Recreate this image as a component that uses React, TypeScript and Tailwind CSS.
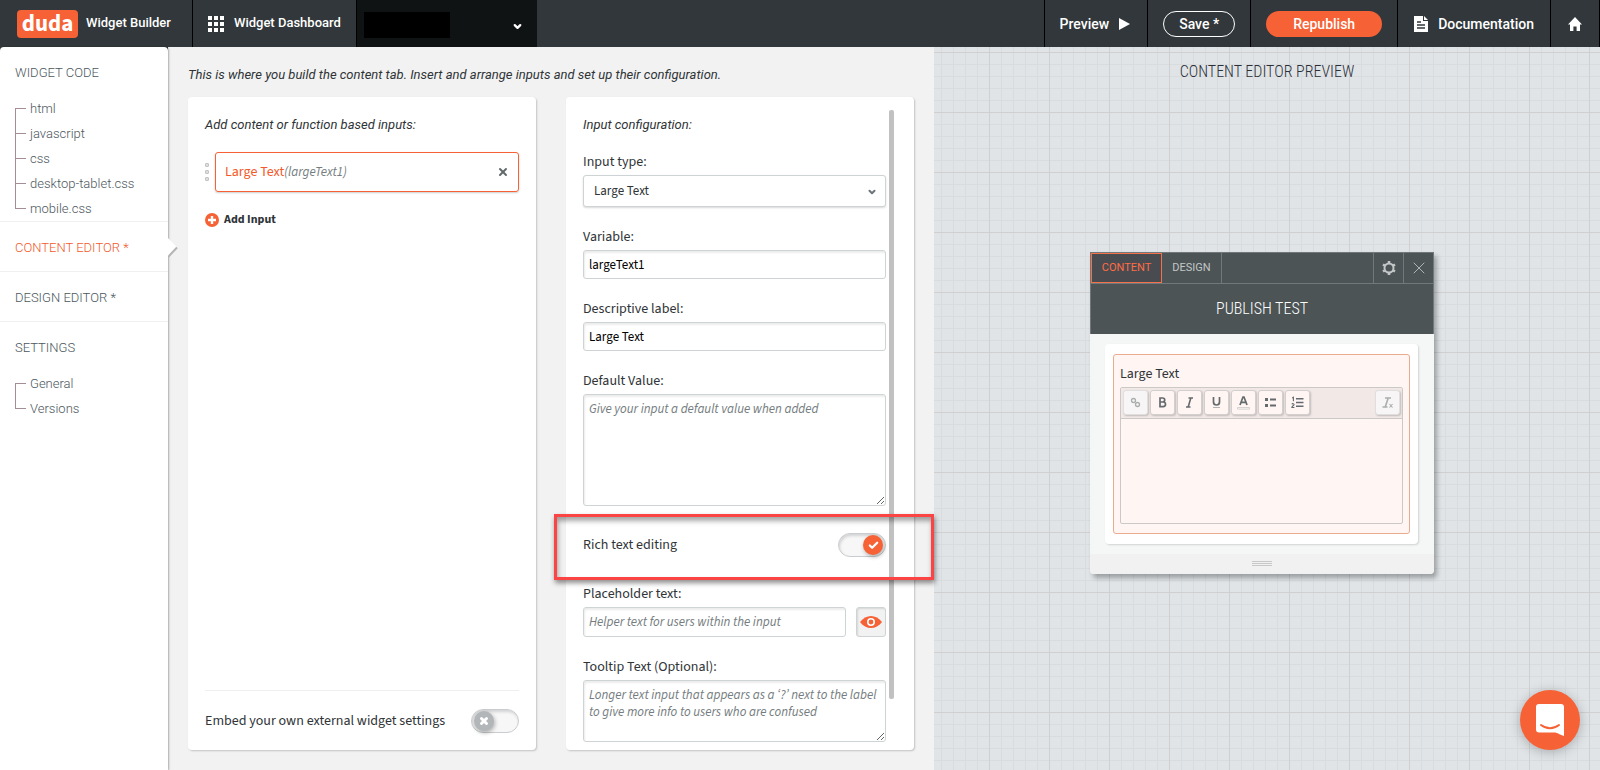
import type { ReactNode } from "react"
import { Check, ChevronDown, X } from "lucide-react"
import { clsx } from "clsx"

const source = "font-['Source_Sans_3','Source_Sans_Pro','Noto_Sans',sans-serif]"
const roboto = "font-['Roboto',sans-serif]"
const condensed = "font-['Roboto_Condensed','Roboto',sans-serif]"

const codeFiles = ["html", "javascript", "css", "desktop-tablet.css", "mobile.css"]
const settingsPages = ["General", "Versions"]

const field =
  "w-full rounded-[3px] border border-[#ced3d6] bg-white px-[5px] text-[13px] text-black shadow-[inset_1px_2px_2px_rgba(0,0,0,0.08)] outline-none placeholder:italic placeholder:text-[#757d80]"

function Header() {
  return (
    <header className={clsx(roboto, "flex h-[47px] shrink-0 bg-[#31373a] text-sm font-medium text-white")}>
      <a href="#" className="flex items-center gap-2 border-r border-black pr-[21px] pl-[17px] text-[13px]">
        <span
          className={clsx(
            source,
            "flex h-7 w-[61px] items-center justify-center rounded-[4px] bg-[#f66135] text-[23px] leading-7 font-bold",
          )}
        >
          duda
        </span>
        Widget Builder
      </a>
      <a href="#" className="flex items-center gap-[10px] border-r border-black px-[15px] text-[13px]">
        <svg width="16" height="16" viewBox="0 0 16 16" fill="currentColor">
          {[0, 6, 12].map((y) => [0, 6, 12].map((x) => <rect key={`${x}-${y}`} x={x} y={y} width="4" height="4" />))}
        </svg>
        Widget Dashboard
      </a>
      <button aria-label="Choose widget" className="flex w-[180px] items-center justify-between bg-[#101314] pr-[14px] pl-[7px]">
        <span className="mt-[3px] h-[26px] w-[86px] bg-black" />
        <ChevronDown size={11} strokeWidth={5} className="mt-[5px]" />
      </button>

      <nav className="ml-auto flex">
        <button className="flex items-center gap-[10px] border-l border-black pr-[17px] pl-[15px]">
          Preview
          <svg width="11" height="12" viewBox="0 0 11 12" fill="currentColor">
            <path d="M0 0l11 6-11 6z" />
          </svg>
        </button>
        <div className="flex items-center border-l border-black px-[15px]">
          <button className="h-[26px] w-[72px] rounded-full border border-white">Save *</button>
        </div>
        <div className="flex items-center border-l border-black px-[15px]">
          <button className="h-[26px] w-[116px] rounded-full bg-[#f66135]">Republish</button>
        </div>
        <a href="#" className="flex items-center gap-[10px] border-l border-black px-4">
          <svg width="14" height="16" viewBox="0 0 14 16">
            <path d="M0 0h9v5h5v11H0z" fill="#fff" />
            <path d="M10 0l4 4h-4z" fill="#fff" />
            <path d="M3 6h4M3 9h8M3 12h8" stroke="#31373a" strokeWidth="1.5" />
          </svg>
          Documentation
        </a>
        <a href="#" aria-label="Home" className="flex items-center border-x border-black px-[17px]">
          <svg width="14" height="14" viewBox="0 0 14 14" fill="currentColor">
            <path d="M7 0l7 7.6h-2V14H8.6V9.4H5.4V14H2V7.6H0z" />
          </svg>
        </a>
      </nav>
    </header>
  )
}

function Tree({ items }: { items: string[] }) {
  return (
    <ul className="pl-[15px]">
      {items.map((item, i) => (
        <li key={item} className="flex h-[25px]">
          <span className="flex w-[11px] flex-col">
            <span className={clsx("h-3 border-[#a58d95]", i > 0 && "border-l")} />
            <span className={clsx("flex-1 border-t border-[#a58d95]", i < items.length - 1 && "border-l")} />
          </span>
          <a href="#" className="ml-1 leading-[26px]">
            {item}
          </a>
        </li>
      ))}
    </ul>
  )
}

function Sidebar() {
  return (
    <aside
      className={clsx(
        roboto,
        "relative z-10 rounded-t-[4px] bg-white text-[13px] font-light text-[#4c575d] shadow-[1px_0_2px_rgba(0,0,0,0.3)]",
      )}
    >
      <section className="border-b border-[#f0f0f0]">
        <h2 className="h-[49px] pl-[15px] leading-[52px]">WIDGET CODE</h2>
        <Tree items={codeFiles} />
      </section>
      <div className="relative h-[50px] border-b border-[#f0f0f0] pl-[15px] leading-[52px]">
        <a href="#" className="text-[#f25a2c]">
          CONTENT EDITOR *
        </a>
        <svg width="10" height="22" viewBox="0 0 10 22" className="absolute top-[15px] left-full">
          <path d="M0 1l9 9.5L0 20z" fill="#fff" />
          <path d="M9 10.5L0 20" stroke="#b4b4b4" strokeWidth="2" />
        </svg>
      </div>
      <div className="h-[50px] border-b border-[#f0f0f0] pl-[15px] leading-[52px]">
        <a href="#">DESIGN EDITOR *</a>
      </div>
      <section>
        <h2 className="h-[49px] pl-[15px] leading-[52px]">SETTINGS</h2>
        <Tree items={settingsPages} />
      </section>
    </aside>
  )
}

function Toggle({ id, on }: { id: string; on?: boolean }) {
  return (
    <span className="relative flex">
      <input
        id={id}
        type="checkbox"
        defaultChecked={on}
        className="h-6 w-12 appearance-none rounded-full border border-[#c9cdd0] bg-[#f7f7f7] shadow-[inset_1px_2px_3px_rgba(0,0,0,0.15)]"
      />
      <span
        className={clsx(
          "pointer-events-none absolute top-[2px] flex size-5 items-center justify-center rounded-full text-white shadow-[1px_2px_4px_rgba(0,0,0,0.3)]",
          on ? "right-[3px] bg-[#f66135]" : "left-[3px] bg-[#b3b6b8]",
        )}
      >
        {on ? <Check size={11} strokeWidth={5} /> : <X size={10} strokeWidth={7} />}
      </span>
    </span>
  )
}

function Card({ children, className }: { children: ReactNode; className?: string }) {
  return (
    <section className={clsx("rounded-[4px] bg-white shadow-[1px_1px_2px_rgba(0,0,0,0.2)]", className)}>
      {children}
    </section>
  )
}

function InputsCard() {
  return (
    <Card className="flex flex-col px-[17px]">
      <h3 className={clsx(roboto, "mt-[18px] text-[13px] leading-5 italic")}>Add content or function based inputs:</h3>
      <div className="mt-[17px] flex items-center gap-[6px]">
        <span className="flex flex-col gap-[3px]">
          <span className="size-1 rounded-[1px] border border-[#c4c4c4] bg-[#dedede]" />
          <span className="size-1 rounded-[1px] border border-[#c4c4c4] bg-[#dedede]" />
          <span className="size-1 rounded-[1px] border border-[#c4c4c4] bg-[#dedede]" />
        </span>
        <div className="flex h-10 flex-1 items-center rounded-[3px] border border-[#f66135] px-[9px] shadow-[0_1px_2px_rgba(0,0,0,0.2)]">
          <span className="text-[#f25a2c]">Large Text</span>
          <em className="text-[13px] text-[#757d80]">(largeText1)</em>
          <button aria-label="Remove input" className="ml-auto text-[#62696c]">
            <X size={12} strokeWidth={4} />
          </button>
        </div>
      </div>
      <button className="mt-[18px] flex items-center gap-[5px] self-start text-xs leading-5 font-bold">
        <svg width="14" height="14" viewBox="0 0 14 14">
          <circle cx="7" cy="7" r="7" fill="#f66135" />
          <path d="M7 3v8M3 7h8" stroke="#fff" strokeWidth="2.4" />
        </svg>
        Add Input
      </button>
      <div className="mt-auto flex h-[60px] items-center justify-between border-t border-[#efefef]">
        <label htmlFor="embed">Embed your own external widget settings</label>
        <Toggle id="embed" />
      </div>
    </Card>
  )
}

function ConfigCard() {
  return (
    <Card className="flex items-start gap-[3px] pr-5 pl-[17px]">
      <form className="flex flex-1 flex-col pt-[18px] pb-2">
        <h3 className={clsx(roboto, "text-[13px] leading-5 italic")}>Input configuration:</h3>

        <label htmlFor="type" className="mt-[17px]">Input type:</label>
        <div className="relative mt-[3px]">
          <select
            id="type"
            className="h-8 w-full appearance-none rounded-[3px] border border-[#ced3d6] bg-white px-[10px] text-[13px] shadow-[0_1px_2px_rgba(0,0,0,0.15)]"
          >
            <option>Large Text</option>
          </select>
          <ChevronDown size={10} strokeWidth={5} className="pointer-events-none absolute top-3 right-[9px] text-[#6f7679]" />
        </div>

        <label htmlFor="variable" className="mt-5">Variable:</label>
        <input id="variable" defaultValue="largeText1" className={clsx(field, "mt-[3px] h-[29px]")} />

        <label htmlFor="descriptive" className="mt-5">Descriptive label:</label>
        <input id="descriptive" defaultValue="Large Text" className={clsx(field, "mt-[3px] h-[29px]")} />

        <label htmlFor="default" className="mt-5">Default Value:</label>
        <textarea
          id="default"
          placeholder="Give your input a default value when added"
          className={clsx(field, "mt-[3px] h-28 py-[6px] leading-[17px]")}
        />

        <div className="relative mt-[27px] flex items-center justify-between">
          <label htmlFor="rich">Rich text editing</label>
          <Toggle id="rich" on />
          {/* highlight around the rich text row */}
          <span className="pointer-events-none absolute -top-[19px] -right-12 -bottom-[23px] -left-[29px] z-10 border-3 border-[#fb4545] shadow-[1px_3px_5px_rgba(0,0,0,0.45),inset_1px_4px_5px_rgba(0,0,0,0.35)]" />
        </div>

        <label htmlFor="placeholder" className="mt-[27px]">Placeholder text:</label>
        <div className="mt-[3px] flex gap-[10px]">
          <input
            id="placeholder"
            placeholder="Helper text for users within the input"
            className={clsx(field, "h-[30px] flex-1")}
          />
          <button
            type="button"
            aria-label="Show placeholder"
            className="flex size-[30px] items-center justify-center rounded-[3px] border border-[#ced3d6] bg-[#f2f2f2] shadow-[inset_1px_1px_2px_rgba(0,0,0,0.12)]"
          >
            <svg width="22" height="12" viewBox="0 0 22 12">
              <path d="M0 6C3 2 7 0 11 0s8 2 11 6c-3 4-7 6-11 6S3 10 0 6z" fill="#f66135" />
              <circle cx="11" cy="6" r="3.2" fill="#f66135" stroke="#fff" strokeWidth="1.6" />
            </svg>
          </button>
        </div>

        <label htmlFor="tooltip" className="mt-5">Tooltip Text (Optional):</label>
        <textarea
          id="tooltip"
          placeholder="Longer text input that appears as a ‘?’ next to the label to give more info to users who are confused"
          className={clsx(field, "mt-[3px] h-[62px] py-[6px] leading-[17px]")}
        />
      </form>
      <span className="mt-[13px] h-[589px] w-[5px] rounded-[2px] bg-[#c1c1c1]" />
    </Card>
  )
}

function ToolButton({ label, faded, children }: { label: string; faded?: boolean; children: ReactNode }) {
  return (
    <button
      aria-label={label}
      className={clsx(
        "flex size-[25px] items-center justify-center rounded-[3px] border shadow-[1px_1px_2px_rgba(0,0,0,0.2)]",
        faded ? "border-[#dfdfdf] bg-[#f7f5f5] text-[#a9adae]" : "border-[#d3cfcf] bg-[#fff6f4] text-[#646a6d]",
      )}
    >
      <svg width="15" height="15" viewBox="0 0 15 15" fill="none" stroke="currentColor">
        {children}
      </svg>
    </button>
  )
}

function EditorToolbar() {
  return (
    <div className="flex gap-[2px] border-b border-[#cbc8c8] bg-[#f2e9e7] px-[2px] pt-[2px] pb-[3px]">
      <ToolButton label="Link" faded>
        <circle cx="5.5" cy="5.5" r="2" strokeWidth="1.3" />
        <circle cx="9.5" cy="9.5" r="2" strokeWidth="1.3" />
      </ToolButton>
      <ToolButton label="Bold">
        <path d="M5 3h2.7a2 2 0 010 4H5zM5 7h3.200a2.300 2.300 0 010 4.600H5z" strokeWidth="1.700" />
      </ToolButton>
      <ToolButton label="Italic">
        <path d="M6.500 3h4.500M4 12h4.500M8.800 3L6.200 12" strokeWidth="1.600" />
      </ToolButton>
      <ToolButton label="Underline">
        <path d="M4.500 2v5a3 3 0 006 0V2" strokeWidth="1.700" />
        <path d="M4 12.500h7" opacity="0.5" />
      </ToolButton>
      <ToolButton label="Text color">
        <path d="M4 10l3-8h1l3 8M5.200 7.400h4.600" strokeWidth="1.700" />
        <path d="M1.500 12.500h12v1.600h-12z" stroke="#d4d2d2" />
      </ToolButton>
      <ToolButton label="Bulleted list">
        <path d="M2 4.500h3M2 10.500h3" strokeWidth="3" />
        <path d="M7 4.500h6M7 10.500h6" strokeWidth="1.800" />
      </ToolButton>
      <ToolButton label="Numbered list">
        <path d="M2.200 3l1.200-.8v4M1.800 9.300c.6-1 2.400-.8 2.200.4-.1.8-2.200 1.600-2.200 2.800h2.600" strokeWidth="1.100" />
        <path d="M6 3.800h7.500M6 7.500h7.500M6 11.200h7.500" strokeWidth="1.500" />
      </ToolButton>
      <span className="flex-1" />
      <ToolButton label="Clear formatting" faded>
        <path d="M5 3h6M2.500 12h5M8.200 3L5.200 12" strokeWidth="1.600" />
        <path d="M9.500 9l3 3.500M12.500 9l-3 3.500" strokeWidth="1.100" />
      </ToolButton>
    </div>
  )
}

function PreviewWindow() {
  return (
    <div className="flex w-[344px] flex-col rounded-b-[4px] bg-[#f5f6f6] shadow-[3px_4px_5px_rgba(0,0,0,0.3)]">
      <div className={clsx(roboto, "border border-b-0 border-[#70787b] bg-[#4c5456] text-[#c3c7c8]")}>
        <div className="flex h-[31px] border-b border-[#70787b] text-[11px]">
          <button className="w-[71px] border border-[#f4724b] bg-[#484b50] text-[#ff6d45]">CONTENT</button>
          <button className="w-[60px] border-r border-[#70787b]">DESIGN</button>
          <button aria-label="Settings" className="ml-auto flex w-[30px] items-center justify-center border-l border-[#70787b]">
            <svg width="14" height="14" viewBox="0 0 14 14" fill="none" stroke="currentColor">
              <circle cx="7" cy="7" r="4.500" strokeWidth="2" />
              <path
                d="M7 0v2M7 12v2M1 3.500l1.700 1M11.300 9.500l1.700 1M1 10.500l1.700-1M11.300 4.500l1.700-1"
                strokeWidth="2.600"
              />
            </svg>
          </button>
          <button aria-label="Close" className="flex w-[30px] items-center justify-center border-l border-[#70787b]">
            <X size={20} strokeWidth={1} />
          </button>
        </div>
        <h3 className={clsx(condensed, "h-[50px] text-center text-base leading-[50px] font-light text-white")}>
          PUBLISH TEST
        </h3>
      </div>

      <div className="mr-4 ml-[15px] mt-[10px] rounded-[4px] bg-white px-2 py-[10px] shadow-[1px_1px_2px_rgba(0,0,0,0.15)]">
        <div className="rounded-[3px] border border-[#e8ab90] bg-[#fff6f4] px-[6px] py-[9px]">
          <label htmlFor="rich-editor">Large Text</label>
          <div className="mt-[3px] rounded-[2px] border border-[#cbc8c8]">
            <EditorToolbar />
            <textarea id="rich-editor" className="block h-[104px] w-full resize-none px-2 outline-none" />
          </div>
        </div>
      </div>

      <div className="mt-[10px] flex h-5 flex-col items-center gap-px rounded-b-[4px] bg-[#f1f1f1] pt-[7px]">
        <span className="h-px w-5 bg-[#c8c8c8]" />
        <span className="h-px w-5 bg-[#c8c8c8]" />
        <span className="h-px w-5 bg-[#c8c8c8]" />
      </div>
    </div>
  )
}

const gridPaper =
  "bg-[#e0e4e7] bg-[linear-gradient(#d0d0d1_1px,transparent_1px),linear-gradient(90deg,#d0d0d1_1px,transparent_1px),linear-gradient(#d8dcde_1px,transparent_1px),linear-gradient(90deg,#d8dcde_1px,transparent_1px)] bg-[size:60px_60px,60px_60px,12px_12px,12px_12px] bg-[position:0_5px,55px_0,0_5px,7px_0]"

function PreviewPane() {
  return (
    <section className={clsx("flex flex-col items-center", gridPaper)}>
      <h2 className={clsx(condensed, "mt-[15px] text-base leading-5 font-light text-[#2b2f38]")}>CONTENT EDITOR PREVIEW</h2>
      <div className="flex flex-1 items-center pr-[10px] pb-[27px]">
        <PreviewWindow />
      </div>
    </section>
  )
}

export default function App() {
  return (
    <div className={clsx(source, "flex min-h-screen flex-col bg-[#31373a] text-sm text-[#2f3437]")}>
      <Header />
      <div className="grid flex-1 grid-cols-[168px_766fr_666fr]">
        <Sidebar />
        <main className="flex flex-col bg-[#f2f2f2] px-5 pt-[18px] pb-5">
          <p className={clsx(roboto, "mb-3 text-[13px] leading-5 italic")}>
            This is where you build the content tab. Insert and arrange inputs and set up their configuration.
          </p>
          <div className="grid flex-1 grid-cols-2 gap-[30px]">
            <InputsCard />
            <ConfigCard />
          </div>
        </main>
        <PreviewPane />
      </div>

      <button
        aria-label="Open chat"
        className="fixed right-5 bottom-5 flex size-[60px] items-center justify-center rounded-full bg-[#f66135] shadow-[0_2px_12px_rgba(0,0,0,0.25)]"
      >
        <svg width="28" height="32" viewBox="0 0 28 32">
          <path d="M3 0h22a3 3 0 013 3v29c-4-1-6-3.500-10-3.500H3a3 3 0 01-3-3V3a3 3 0 013-3z" fill="#fff" />
          <path d="M5 21c5.500 4.200 12.500 4.200 18 0" fill="none" stroke="#f66135" strokeWidth="2" strokeLinecap="round" />
        </svg>
      </button>
    </div>
  )
}
